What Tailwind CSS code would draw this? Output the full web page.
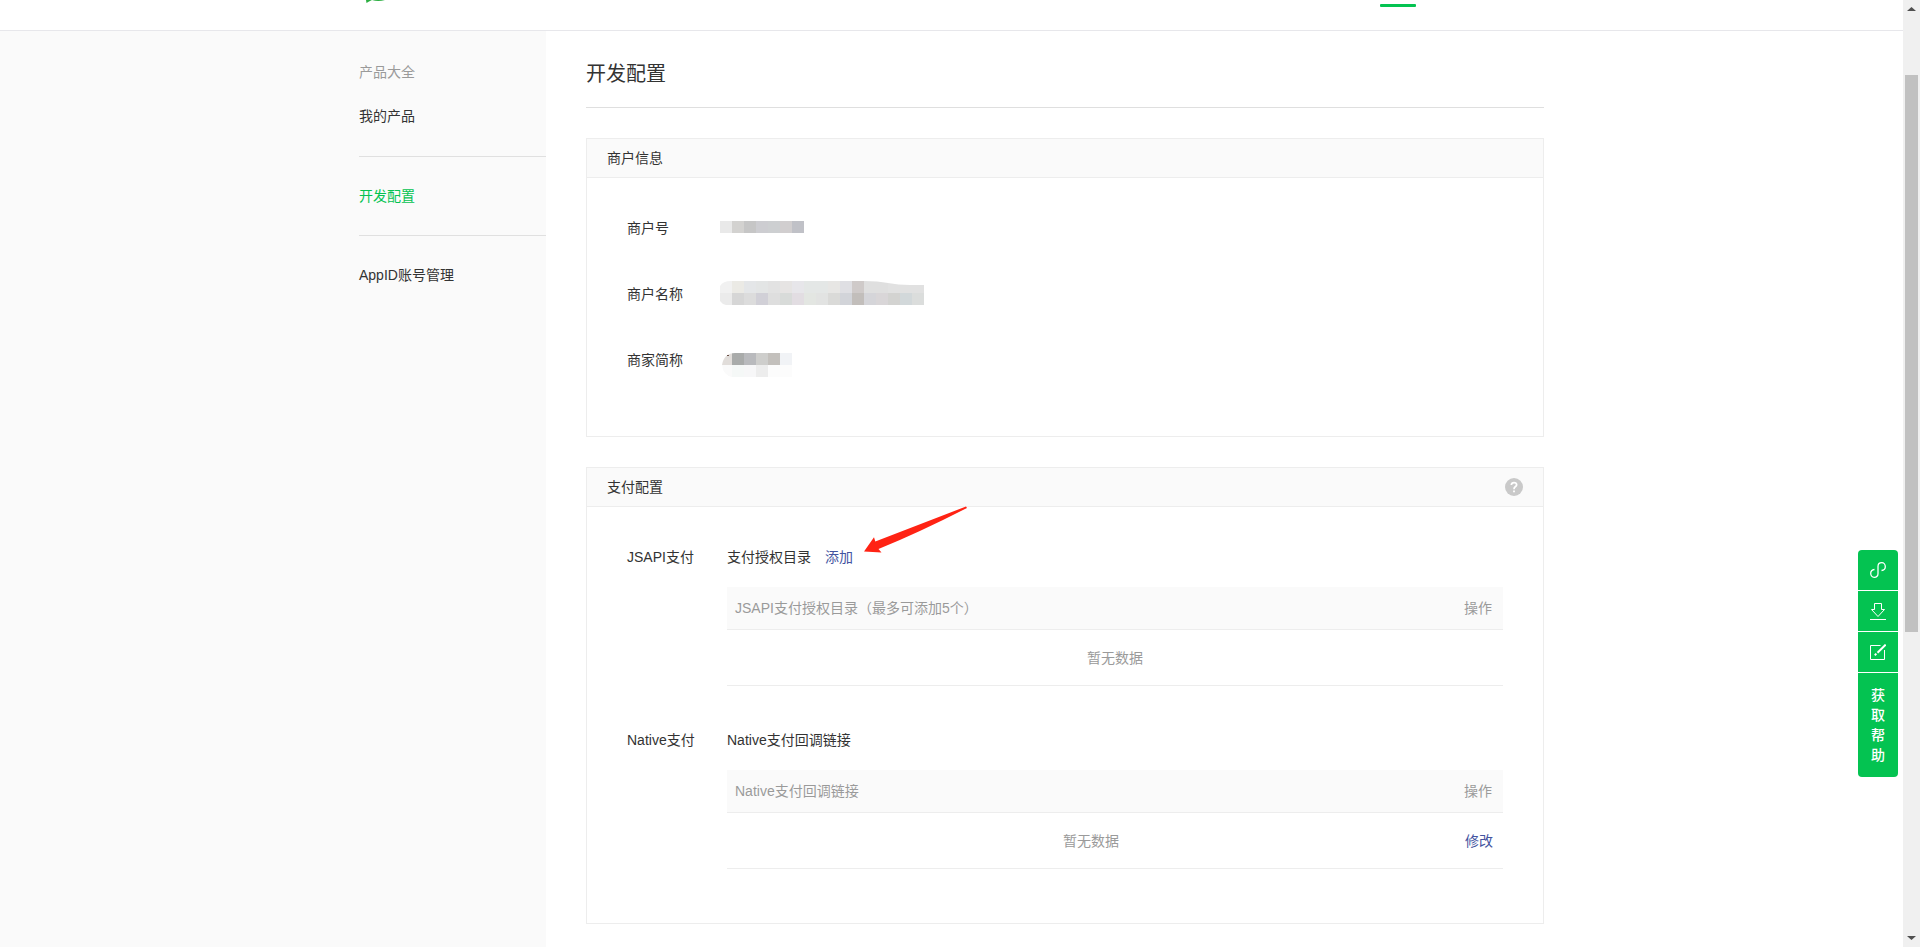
<!DOCTYPE html>
<html lang="zh-CN">
<head>
<meta charset="utf-8">
<title>开发配置</title>
<script src="https://cdn.jsdelivr.net/npm/@tailwindcss/browser@4"></script>
</head>
<body class="flex min-h-screen bg-white font-['Liberation_Sans','Noto_Sans_CJK_SC',sans-serif] text-[14px] leading-[22px] text-[#333]">
<div class="flex min-w-0 flex-1 flex-col">
  <header class="flex justify-center border-b border-[#e7e7eb] bg-white">
    <div class="flex h-[30px] w-[1185px] items-start justify-between">
      <svg class="ml-[7px] block" width="20" height="4" viewBox="0 0 20 4" fill="#2aae40"><path d="M0 0H6L3 1.500L.5 3Z"/><path d="M6 0H19Q12 2 6 0Z"/></svg>
      <div class="mt-1 mr-32 h-[3px] w-9 rounded-[1px] bg-[#04c351]"></div>
    </div>
  </header>

  <div class="flex flex-1">
    <div class="flex-1 bg-[#fafafa]"></div>
    <aside class="w-[187px] shrink-0 bg-[#fafafa]">
      <nav class="pt-[19px] leading-[44px]">
        <div class="border-b border-[#e0e0e0] pb-[18px]">
          <a href="#" class="block text-[#9a9a9a]">产品大全</a>
          <a href="#" class="block">我的产品</a>
        </div>
        <div class="border-b border-[#e0e0e0] py-[17px]">
          <a href="#" class="block text-[#04c351]">开发配置</a>
        </div>
        <div class="py-[17px]">
          <a href="#" class="block">AppID账号管理</a>
        </div>
      </nav>
    </aside>

    <main class="w-[998px] shrink-0 pb-[23px] pl-10">
      <h1 class="border-b border-[#dfdfdf] pt-[28px] pb-[18px] text-[20px] leading-[30px]">开发配置</h1>

      <section class="mt-[30px] border border-[#ededed]">
        <h2 class="border-b border-[#ededed] bg-[#fafafa] px-5 leading-[38px]">商户信息</h2>
        <dl class="flex flex-col gap-11 px-10 pt-[39px] pb-[65px]">
          <div class="flex h-[22px]">
            <dt class="w-[93px]">商户号</dt>
            <dd class="pt-[4px]">
              <svg width="84" height="12" shape-rendering="crispEdges"><path fill="#e9e9e9" d="M0 0h12v12H0z"/><path fill="#d3d2d0" d="M12 0h12v12H12z"/><path fill="#c6c6c6" d="M24 0h12v12H24z"/><path fill="#cdcdd1" d="M36 0h12v12H36z"/><path fill="#cdcfd1" d="M48 0h12v12H48z"/><path fill="#d1cecf" d="M60 0h12v12H60z"/><path fill="#c0c1c7" d="M72 0h12v12H72z"/></svg>
            </dd>
          </div>
          <div class="flex h-[22px]">
            <dt class="w-[93px]">商户名称</dt>
            <dd>
              <svg class="-mt-[2px]" width="204" height="24"><defs><clipPath id="m"><path d="M0 5Q3 0 11 0H144Q158 0 168 2T190 4H204V24H6Q2 23 0 20Z"/></clipPath></defs><g clip-path="url(#m)" shape-rendering="crispEdges">
              <path fill="#f1f1f1" d="M0 0h12v12H0z"/><path fill="#ebeae5" d="M12 0h12v12H12z"/><path fill="#e4e6e8" d="M24 0h12v12H24z"/><path fill="#e3e5e5" d="M36 0h12v12H36z"/><path fill="#e2e2e2" d="M48 0h12v12H48z"/><path fill="#e6e4e3" d="M60 0h12v12H60z"/><path fill="#e7e6ea" d="M72 0h12v12H72z"/><path fill="#e4e7e6" d="M84 0h24v12H84z"/><path fill="#e7e6e4" d="M108 0h12v12H108z"/><path fill="#dfdfe3" d="M120 0h12v12H120z"/><path fill="#cfcac9" d="M132 0h12v12H132z"/><path fill="#dfdfdf" d="M144 0h24v12H144z"/><path fill="#e1e1e1" d="M168 0h36v12H168z"/>
              <path fill="#ebebeb" d="M0 12h12v12H0z"/><path fill="#d6d6d6" d="M12 12h12v12H12z"/><path fill="#dcdcdc" d="M24 12h12v12H24z"/><path fill="#d1d0d7" d="M36 12h12v12H36z"/><path fill="#dedede" d="M48 12h12v12H48z"/><path fill="#d8dbd9" d="M60 12h12v12H60z"/><path fill="#e2dde2" d="M72 12h12v12H72z"/><path fill="#e3e6e2" d="M84 12h12v12H84z"/><path fill="#e2e3e2" d="M96 12h12v12H96z"/><path fill="#dadad8" d="M108 12h12v12H108z"/><path fill="#d2d4d9" d="M120 12h12v12H120z"/><path fill="#c2bebb" d="M132 12h12v12H132z"/><path fill="#d5d5d9" d="M144 12h12v12H144z"/><path fill="#d9d6d8" d="M156 12h12v12H156z"/><path fill="#d3d3d1" d="M168 12h12v12H168z"/><path fill="#d2d8da" d="M180 12h12v12H180z"/><path fill="#dbdddc" d="M192 12h12v12H192z"/></g></svg>
            </dd>
          </div>
          <div class="flex h-[22px]">
            <dt class="w-[93px]">商家简称</dt>
            <dd class="pt-[4px]">
              <svg width="72" height="24"><defs><clipPath id="n"><path d="M2 12Q4 0 15 0H72V24H12Q3 22 2 12Z"/></clipPath></defs><g clip-path="url(#n)" shape-rendering="crispEdges"><path fill="#e1ddda" d="M0 0h12v12H0z"/><path fill="#a9abaa" d="M12 0h12v12H12z"/><path fill="#b9babd" d="M24 0h12v12H24z"/><path fill="#cececc" d="M36 0h12v12H36z"/><path fill="#c3c0bc" d="M48 0h12v12H48z"/><path fill="#f1f3f6" d="M60 0h12v12H60z"/><path fill="#fafafa" d="M0 12h12v12H0z"/><path fill="#f5f8f7" d="M12 12h12v12H12z"/><path fill="#f7f7f8" d="M24 12h12v12H24z"/><path fill="#ededed" d="M36 12h12v12H36z"/><path fill="#fcfcfc" d="M48 12h24v12H48z"/></g><path fill="#6b5148" d="M7 2h2v1H7z"/></svg>
            </dd>
          </div>
        </dl>
      </section>

      <section class="relative mt-[30px] border border-[#ededed]">
        <div class="flex items-center justify-between border-b border-[#ededed] bg-[#fafafa] px-5 leading-[38px]">
          <h2>支付配置</h2>
          <button type="button" aria-label="帮助" class="block">
            <svg class="block" width="18" height="18" viewBox="0 0 18 18"><circle cx="9" cy="9" r="9" fill="#c9c9c9"/><path d="M6.3 7Q6.5 4.6 9 4.6T11.7 6.8Q11.7 7.8 10.3 8.8Q9 9.7 9 11.2" fill="none" stroke="#fff" stroke-width="1.7"/><path fill="#fff" d="M8.1 12.4h1.8v1.8H8.1z"/></svg>
          </button>
        </div>
        <svg class="pointer-events-none absolute top-[37px] left-[276px]" width="106" height="48" viewBox="0 0 106 48" fill="#ff2314" aria-hidden="true"><path d="M1 46.500L11 32.300L12.300 36.500L103 1.500L104 3Q55 28 15.500 44L18.500 47.500Z"/></svg>

        <div class="flex flex-col gap-[43px] px-10 pt-[39px] pb-[54px]">
          <div class="flex">
            <h3 class="w-[100px] shrink-0">JSAPI支付</h3>
            <div class="min-w-0 flex-1">
              <div class="flex gap-3.5"><span>支付授权目录</span><a href="#" class="text-[#44549f]">添加</a></div>
              <table class="mt-[19px] w-full table-fixed border-separate border-spacing-0 text-[#9a9a9a]">
                <thead><tr class="bg-[#fafafa]"><th class="h-[43px] border-b border-[#ededed] p-0 pl-2 text-left font-normal">JSAPI支付授权目录（最多可添加5个）</th><th class="w-12 border-b border-[#ededed] p-0 pr-0.5 text-center font-normal">操作</th></tr></thead>
                <tbody><tr><td colspan="2" class="h-14 border-b border-[#ededed] p-0 text-center">暂无数据</td></tr></tbody>
              </table>
            </div>
          </div>
          <div class="flex">
            <h3 class="w-[100px] shrink-0">Native支付</h3>
            <div class="min-w-0 flex-1">
              <div>Native支付回调链接</div>
              <table class="mt-[19px] w-full table-fixed border-separate border-spacing-0 text-[#9a9a9a]">
                <thead><tr class="bg-[#fafafa]"><th class="h-[43px] border-b border-[#ededed] p-0 pl-2 text-left font-normal">Native支付回调链接</th><th class="w-12 border-b border-[#ededed] p-0 pr-0.5 text-center font-normal">操作</th></tr></thead>
                <tbody><tr><td class="h-14 border-b border-[#ededed] p-0 text-center">暂无数据</td><td class="border-b border-[#ededed] p-0 text-center"><a href="#" class="text-[#44549f]">修改</a></td></tr></tbody>
              </table>
            </div>
          </div>
        </div>
      </section>
    </main>
    <div class="flex-1"></div>
  </div>
</div>

<!-- floating help toolbar -->
<div class="fixed top-[550px] right-[22px] flex w-10 flex-col gap-px overflow-hidden rounded-[4px] text-white">
  <button type="button" aria-label="链接" class="flex h-10 items-center justify-center bg-[#04c351]">
    <svg width="16" height="16" viewBox="0 0 16 16" fill="none" stroke="#fff" stroke-width="1.3"><path d="M4.500 7.500C2 7.800 .7 9.300 .7 11.300C.7 13.500 2.200 15.300 4.200 15.300C6.300 15.300 8 13.700 8 11.500V4.500C8 2.300 9.700 .7 11.800 .7C13.800 .7 15.300 2.500 15.300 4.700C15.300 6.700 14 8.200 11.500 8.500"/></svg>
  </button>
  <button type="button" aria-label="下载" class="flex h-10 items-center justify-center bg-[#04c351]">
    <svg width="16" height="18" viewBox="0 0 16 18" fill="none" stroke="#fff"><path d="M4.500 1.500H11.500V7.500H14.500L8 14.500L1.500 7.500H4.500ZM0 17.500H16"/></svg>
  </button>
  <button type="button" aria-label="编辑" class="flex h-10 items-center justify-center bg-[#04c351]">
    <svg width="16" height="16" viewBox="0 0 16 16" fill="none" stroke="#fff"><path d="M10.500 1.500H.5V15.500H14.500V6"/><path d="M15.700 .6L7.500 8.800" stroke-width="2"/><path d="M6.300 9.700L4.800 11.400" stroke-width="2"/></svg>
  </button>
  <button type="button" class="bg-[#04c351] px-[13px] py-3 text-[14px] leading-5 font-medium">获取帮助</button>
</div>

<!-- scrollbar -->
<div class="flex h-screen w-[17px] shrink-0 flex-col items-center justify-between bg-[#f0f0f0]" aria-hidden="true">
  <svg class="mt-[7px] block shrink-0" width="9" height="4" viewBox="0 0 9 4" fill="#505050"><path d="M0 4L4.500 0L9 4Z"/></svg>
  <div class="mt-16 h-[557px] w-[13px] bg-[#c1c1c1]"></div>
  <div class="flex-1"></div>
  <svg class="mb-[7px] block shrink-0" width="9" height="4" viewBox="0 0 9 4" fill="#505050"><path d="M0 0L4.500 4L9 0Z"/></svg>
</div>
</body>
</html>
